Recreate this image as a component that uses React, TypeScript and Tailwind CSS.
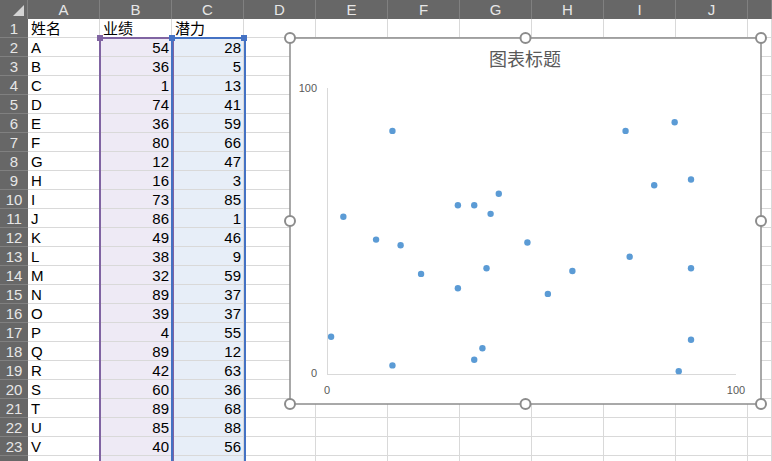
import React from "react";

// sheet data: 姓名 / 业绩 / 潜力 (rows after V sit below the visible area)
const rows: [string, number, number][] = [
  ["A", 54, 28],
  ["B", 36, 5],
  ["C", 1, 13],
  ["D", 74, 41],
  ["E", 36, 59],
  ["F", 80, 66],
  ["G", 12, 47],
  ["H", 16, 3],
  ["I", 73, 85],
  ["J", 86, 1],
  ["K", 49, 46],
  ["L", 38, 9],
  ["M", 32, 59],
  ["N", 89, 37],
  ["O", 39, 37],
  ["P", 4, 55],
  ["Q", 89, 12],
  ["R", 42, 63],
  ["S", 60, 36],
  ["T", 89, 68],
  ["U", 85, 88],
  ["V", 40, 56],
  ["W", 16, 85],
  ["X", 18, 45],
  ["Y", 23, 35],
  ["Z", 32, 30],
];

const visibleRows = 23;
const cols = ["A", "B", "C", "D", "E", "F", "G", "H", "I", "J", ""];
const font = { fontFamily: '"Liberation Sans", "Noto Sans CJK SC", sans-serif' };

// chart object incl. its selection frame and sizing handles
const Chart = () => {
  const m = 7; // margin for the handles
  const w = 471;
  const h = 366;
  const x0 = m + 37;
  const y0 = m + 336;
  const sx = 4.09;
  const sy = 2.86;
  const handles = [
    [0, 0], [w / 2, 0], [w, 0],
    [0, h / 2], [w, h / 2],
    [0, h], [w / 2, h], [w, h],
  ];
  return (
    <svg width={w + 2 * m} height={h + 2 * m} className="block">
      <rect x={m} y={m} width={w} height={h} fill="#fff" stroke="#8c8c8c" strokeWidth="1.5" />
      <text x={m + 235} y={m + 28} textAnchor="middle" fontSize="18" fill="#595959" style={font}>
        图表标题
      </text>
      <line x1={x0 + 0.5} y1={m + 50} x2={x0 + 0.5} y2={y0} stroke="#d9d9d9" strokeWidth="1" />
      <line x1={x0} y1={y0 + 0.5} x2={m + 446} y2={y0 + 0.5} stroke="#d9d9d9" strokeWidth="1" />
      <text x={m + 27} y={m + 54} textAnchor="end" fontSize="11" fill="#595959" style={font}>100</text>
      <text x={m + 27} y={m + 339} textAnchor="end" fontSize="11" fill="#595959" style={font}>0</text>
      <text x={x0} y={m + 356} textAnchor="middle" fontSize="11" fill="#595959" style={font}>0</text>
      <text x={m + 446} y={m + 356} textAnchor="middle" fontSize="11" fill="#595959" style={font}>100</text>
      {rows.map(([n, a, b]) => (
        <circle key={n} cx={x0 + a * sx} cy={y0 - b * sy} r="3.2" fill="#5b9bd5" />
      ))}
      {handles.map(([hx, hy], i) => (
        <circle key={i} cx={m + hx} cy={m + hy} r="5" fill="#fff" stroke="#8c8c8c" strokeWidth="2" />
      ))}
    </svg>
  );
};

export default function App() {
  const gridCols = "grid grid-cols-[28px_repeat(10,72px)_1fr]";
  const body: (string | number)[][] = [["姓名", "业绩", "潜力"], ...rows.slice(0, visibleRows - 1), ["", "", ""]];
  return (
    <div className="relative w-[772px] h-[461px] overflow-hidden bg-white text-[15px] text-black" style={font}>
      {/* column headers */}
      <div className={`${gridCols} h-[19px] bg-[#676767] text-[#e6e6e6]`}>
        <div className="flex items-end justify-end pr-[3px] pb-[3px] border-r border-[#808080]">
          <div className="w-0 h-0 border-l-[11px] border-l-transparent border-b-[11px] border-b-[#d4d4d4]" />
        </div>
        {cols.map((c, j) => (
          <div key={j} className="border-r border-[#808080] flex items-center justify-center leading-none">
            {c}
          </div>
        ))}
      </div>

      {/* rows */}
      {body.map((r, i) => (
        <div key={i} className={`${gridCols} h-[19px]`}>
          <div className="bg-[#676767] text-[#e6e6e6] border-b border-[#808080] flex items-center justify-center leading-none">
            {i < visibleRows ? i + 1 : ""}
          </div>
          {cols.map((_, j) => {
            const sel = i > 0 && (j === 1 || j === 2);
            const bg = sel ? (j === 1 ? "bg-[#eeeaf5]" : "bg-[#e7eef8]") : "";
            const val = j < 3 ? r[j] : "";
            const right = i > 0 && j > 0;
            return (
              <div
                key={j}
                className={`border-r border-b border-[#d9d9d9] ${bg} flex items-end pb-[1px] leading-none overflow-hidden whitespace-nowrap ${
                  right ? "justify-end pr-[2px]" : "pl-[3px]"
                }`}
              >
                {val}
              </div>
            );
          })}
        </div>
      ))}

      {/* range selection outlines, drawn over the cells */}
      <div className="absolute left-[99px] top-[37px] w-[75px] h-[440px] border-2 border-b-0 border-[#8064a2]" />
      <div className="absolute left-[171px] top-[37px] w-[75px] h-[440px] border-2 border-b-0 border-[#4472c4]" />
      <div className="absolute left-[97px] top-[35px] w-[6px] h-[6px] bg-[#8064a2]" />
      <div className="absolute left-[169px] top-[35px] w-[6px] h-[6px] bg-[#4472c4]" />
      <div className="absolute left-[241px] top-[35px] w-[6px] h-[6px] bg-[#4472c4]" />

      {/* floating chart object */}
      <div className="absolute left-[283px] top-[31px]">
        <Chart />
      </div>
    </div>
  );
}
